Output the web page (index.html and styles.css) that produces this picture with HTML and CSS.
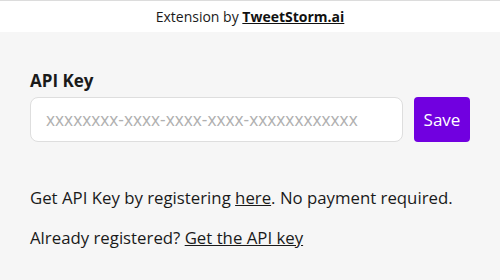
FILE: index.html
```html
<!DOCTYPE html>
<html>
<head>
<meta charset="utf-8">
<link rel="stylesheet" href="styles.css">
</head>
<body>
<header class="topbar">Extension by <a class="brand" href="#">TweetStorm.ai</a></header>
<main class="content">
  <label class="label" for="key">API Key</label>
  <div class="row">
    <input id="key" class="input" type="text" placeholder="xxxxxxxx-xxxx-xxxx-xxxx-xxxxxxxxxxxx">
    <button class="save">Save</button>
  </div>
  <p class="text first">Get API Key by registering <a href="#">here</a>. No payment required.</p>
  <p class="text">Already registered? <a href="#">Get the API key</a></p>
</main>
</body>
</html>
```
FILE: styles.css
```css
html, body {
  margin: 0;
  padding: 0;
  background: #f6f6f6;
  font-family: "Open Sans", "Noto Sans", sans-serif;
  color: #1a1a1a;
}
.topbar {
  height: 32px;
  box-sizing: border-box;
  border-top: 1px solid #dcdcdc;
  background: #fff;
  text-align: center;
  font-size: 14px;
  line-height: 31px;
}
.brand {
  color: #111;
  font-weight: 700;
  text-decoration: underline;
}
.content {
  padding: 38px 30px 0 30px;
}
.label {
  display: block;
  font-size: 17px;
  font-weight: 700;
  line-height: 22px;
  margin-bottom: 5px;
}
.row {
  display: flex;
  gap: 11px;
  width: 440px;
}
.input {
  flex: 1;
  min-width: 0;
  height: 45px;
  box-sizing: border-box;
  border: 1px solid #dedede;
  border-radius: 8px;
  background: #fff;
  padding: 0 15px;
  font-family: inherit;
  font-size: 17.3px;
  color: #333;
}
.input::placeholder {
  color: #b0b0b0;
}
.save {
  width: 56px;
  height: 45px;
  border: none;
  border-radius: 4px;
  background: #7100e0;
  color: #fff;
  font-family: inherit;
  font-size: 17px;
  padding: 0;
}
.text {
  margin: 0;
  font-size: 16.8px;
  line-height: 22px;
}
.text.first {
  margin-top: 45px;
  margin-bottom: 18px;
}
.text a {
  color: inherit;
  text-decoration: underline;
}
```
